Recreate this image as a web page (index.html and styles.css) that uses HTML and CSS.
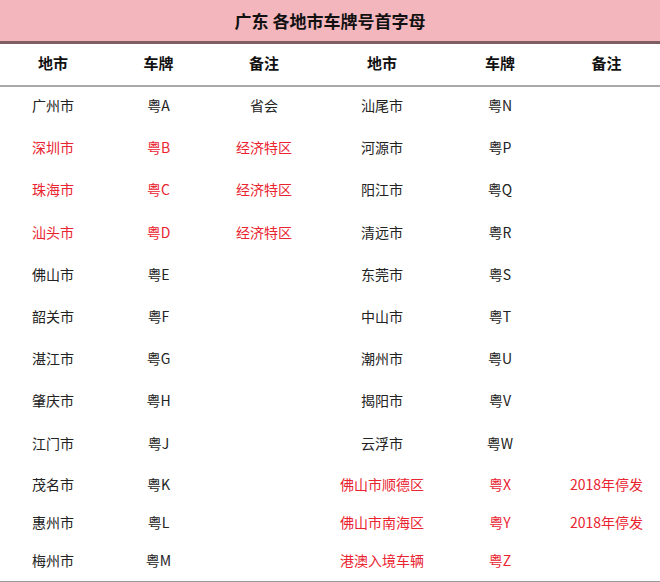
FILE: index.html
```html
<!DOCTYPE html>
<html lang="zh-CN">
<head>
<meta charset="utf-8">
<link rel="stylesheet" href="styles.css">
</head>
<body>
<div class="sheet">
  <div class="title">广东 各地市车牌号首字母</div>
  <div class="grid head">
    <div>地市</div><div>车牌</div><div>备注</div><div>地市</div><div>车牌</div><div>备注</div>
  </div>
  <div class="body">
    <div class="grid row"><div>广州市</div><div>粤A</div><div>省会</div><div>汕尾市</div><div>粤N</div><div></div></div>
    <div class="grid row"><div class="red">深圳市</div><div class="red">粤B</div><div class="red">经济特区</div><div>河源市</div><div>粤P</div><div></div></div>
    <div class="grid row"><div class="red">珠海市</div><div class="red">粤C</div><div class="red">经济特区</div><div>阳江市</div><div>粤Q</div><div></div></div>
    <div class="grid row"><div class="red">汕头市</div><div class="red">粤D</div><div class="red">经济特区</div><div>清远市</div><div>粤R</div><div></div></div>
    <div class="grid row"><div>佛山市</div><div>粤E</div><div></div><div>东莞市</div><div>粤S</div><div></div></div>
    <div class="grid row"><div>韶关市</div><div>粤F</div><div></div><div>中山市</div><div>粤T</div><div></div></div>
    <div class="grid row"><div>湛江市</div><div>粤G</div><div></div><div>潮州市</div><div>粤U</div><div></div></div>
    <div class="grid row"><div>肇庆市</div><div>粤H</div><div></div><div>揭阳市</div><div>粤V</div><div></div></div>
    <div class="grid row"><div>江门市</div><div>粤J</div><div></div><div>云浮市</div><div>粤W</div><div></div></div>
    <div class="grid row short"><div>茂名市</div><div>粤K</div><div></div><div class="red">佛山市顺德区</div><div class="red">粤X</div><div class="red">2018年停发</div></div>
    <div class="grid row short"><div>惠州市</div><div>粤L</div><div></div><div class="red">佛山市南海区</div><div class="red">粤Y</div><div class="red">2018年停发</div></div>
    <div class="grid row short"><div>梅州市</div><div>粤M</div><div></div><div class="red">港澳入境车辆</div><div class="red">粤Z</div><div></div></div>
  </div>
</div>
</body>
</html>
```

FILE: styles.css
```css
html, body {
  margin: 0;
  padding: 0;
  background: #ffffff;
}
body {
  font-family: "Noto Sans CJK SC", "Microsoft YaHei", "Noto Sans", sans-serif;
  color: #1a1a1a;
  width: 660px;
  height: 582px;
  overflow: hidden;
}
.sheet {
  width: 660px;
}
.title {
  height: 44px;
  box-sizing: border-box;
  background: #f4b6bd;
  border-bottom: 3px solid #7d5f63;
  display: flex;
  align-items: center;
  justify-content: center;
  font-size: 17px;
  font-weight: 700;
  color: #111;
  padding-bottom: 1px;
}
.grid {
  display: grid;
  grid-template-columns: 106px 105px 106px 130px 106px 107px;
}
.grid > div {
  display: flex;
  align-items: center;
  justify-content: center;
  white-space: nowrap;
}
.head {
  height: 43px;
  box-sizing: border-box;
  border-bottom: 2px solid #a9a9a9;
  font-size: 15px;
  font-weight: 700;
  color: #111;
  padding-bottom: 4px;
}
.body {
  border-bottom: 2px solid #9a9a9a;
}
.row {
  height: 42.2px;
  box-sizing: border-box;
  padding-bottom: 6px;
  font-size: 14px;
  color: #222;
}
.row.short {
  height: 38px;
  padding-bottom: 4px;
}
.red {
  color: #ea2330;
}
```
